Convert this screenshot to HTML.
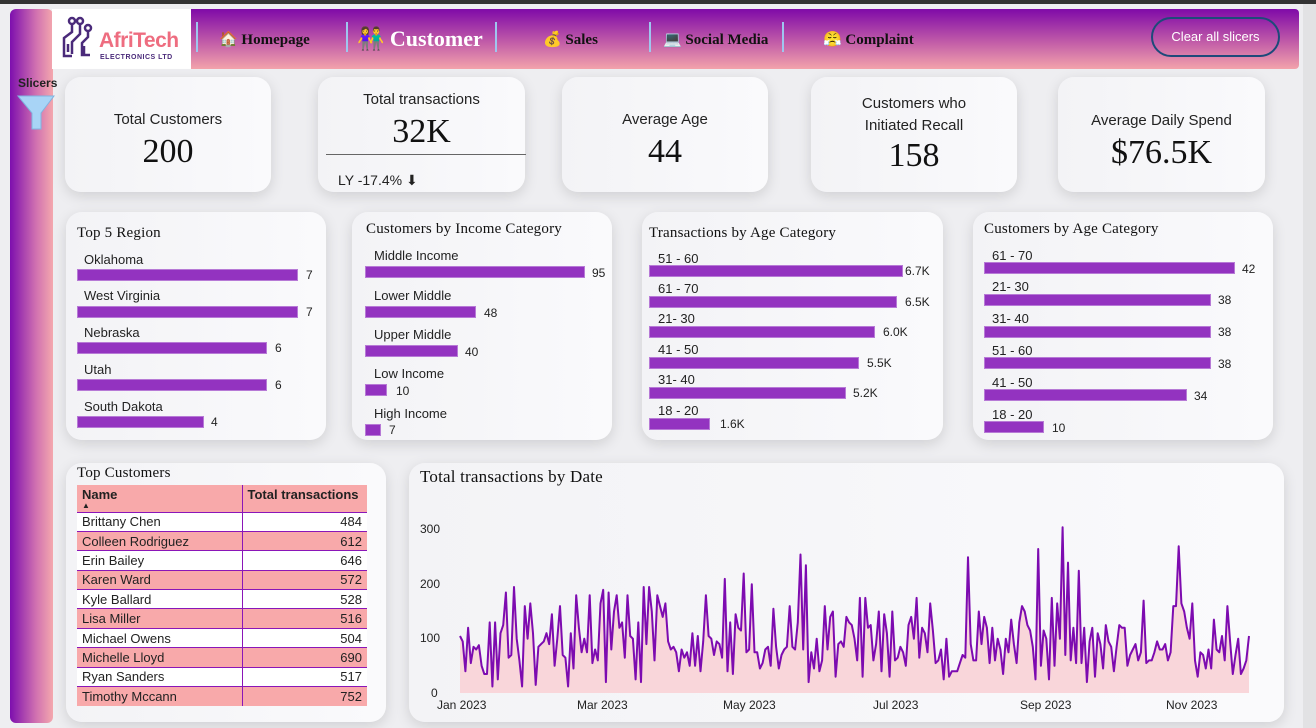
<!DOCTYPE html>
<html><head><meta charset="utf-8">
<style>
*{margin:0;padding:0;box-sizing:border-box}
body{width:1316px;height:728px;overflow:hidden;background:#eeeef1;font-family:"Liberation Sans",sans-serif;position:relative;color:#222}
.a{position:absolute}
.card{position:absolute;background:linear-gradient(90deg,#f3f3f6,#fafafc);border-radius:16px;box-shadow:0 4px 14px rgba(0,0,0,.13)}
.kt{position:absolute;width:100%;text-align:center;font-size:15px;color:#222}
.kv{position:absolute;width:100%;text-align:center;font-size:34px;font-family:"Liberation Serif",serif;color:#111}
.ct{position:absolute;font-family:"Liberation Serif",serif;font-size:15px;color:#111;letter-spacing:.2px;line-height:18px}
.bl{position:absolute;font-size:13px;color:#222;line-height:14px}
.bar{position:absolute;height:12px;background:#9333c0;border:1px solid #b77ad6}
.bv{position:absolute;font-size:12px;color:#222;line-height:13px}
.nav{position:absolute;top:30px;font-family:"Liberation Serif",serif;font-weight:bold;font-size:15px;color:#111}
.sep{position:absolute;top:22px;width:2px;height:30px;background:#9fc6ef}
table{border-collapse:collapse;font-size:13px}
td{height:19.4px;padding:0 5px;border-bottom:1.5px solid #8a16b8}
tr.p td{background:#f8a9aa}
tr.w td{background:#fff}
td+td{border-left:1.5px solid #8a16b8;text-align:right}
</style></head><body>
<div class="a" style="left:0;top:0;width:1316px;height:4px;background:#333"></div>
<div class="a" style="left:1303px;top:4px;width:13px;height:724px;background:#e2e2e4"></div>
<div class="a" style="left:10px;top:9px;width:43px;height:714px;border-radius:6px;background:linear-gradient(90deg,#7d0fae,#d070b0 60%,#f4a8ae);"></div>
<div class="a" style="left:18px;top:76px;font-size:12px;font-weight:bold;color:#222">Slicers</div>
<svg class="a" style="left:17px;top:95px" width="38" height="36"><path d="M1 1 H37 L24 18 V34 H15 V18 Z" fill="#a8d4f6" stroke="#7fb4e0"/></svg>
<div class="a" style="left:52px;top:9px;width:139px;height:60px;background:#fff"></div>
<svg class="a" style="left:60px;top:16px" width="40" height="48" fill="none" stroke="#4a2a7a" stroke-width="2.5"><circle cx="12" cy="5" r="3"/><circle cx="20" cy="5" r="3"/><circle cx="28" cy="12" r="3"/><path d="M12 8v8L4 22v18h8M20 8v10l-8 8v12M28 15v6l-6 6v12h8M8 28v8M24 30v8"/></svg>
<div class="a" style="left:99px;top:29px;font-size:21px;color:#ee6d80;font-weight:bold;letter-spacing:-.5px">AfriTech</div>
<div class="a" style="left:100px;top:54px;font-size:7px;color:#4a2a7a;font-weight:bold;letter-spacing:.5px">ELECTRONICS LTD</div>
<div class="a" style="left:191px;top:9px;width:1108px;height:60px;border-radius:0 4px 4px 0;background:linear-gradient(180deg,#7f0aa8,#c15ca8 55%,#f3a3ab)"></div>
<div class="sep" style="left:196px"></div>
<div class="nav" style="left:219px">🏠 Homepage</div>
<div class="sep" style="left:346px"></div>
<div class="nav" style="left:357px;top:26px;font-size:22px;color:#fff">👫 Customer</div>
<div class="sep" style="left:495px"></div>
<div class="nav" style="left:543px">💰 Sales</div>
<div class="sep" style="left:649px"></div>
<div class="nav" style="left:663px">💻 Social Media</div>
<div class="sep" style="left:782px"></div>
<div class="nav" style="left:823px">😤 Complaint</div>
<div class="a" style="left:1151px;top:17px;width:129px;height:40px;border:2px solid #1d4a7a;border-radius:20px;color:#fff;font-size:13px;text-align:center;line-height:36px">Clear all slicers</div>
<div class="card" style="left:65px;top:77px;width:206px;height:115px"><div class="kt" style="top:34px">Total Customers</div><div class="kv" style="top:56px">200</div></div>
<div class="card" style="left:318px;top:77px;width:207px;height:115px"><div class="kt" style="top:14px">Total transactions</div><div class="kv" style="top:36px">32K</div><div class="a" style="left:8px;top:77px;width:200px;height:1px;background:#666"></div><div class="a" style="left:20px;top:95px;font-size:14px">LY -17.4% ⬇</div></div>
<div class="card" style="left:562px;top:77px;width:206px;height:115px"><div class="kt" style="top:34px">Average Age</div><div class="kv" style="top:56px">44</div></div>
<div class="card" style="left:811px;top:77px;width:206px;height:115px"><div class="kt" style="top:16px;line-height:22px">Customers who<br>Initiated Recall</div><div class="kv" style="top:60px">158</div></div>
<div class="card" style="left:1058px;top:77px;width:207px;height:115px"><div class="kt" style="top:35px">Average Daily Spend</div><div class="kv" style="top:57px">$76.5K</div></div>

<div class="card" style="left:66px;top:212px;width:260px;height:228px"></div>
<div class="ct" style="left:77px;top:224px">Top 5 Region</div>
<div class="bl" style="left:84px;top:253px">Oklahoma</div><div class="bar" style="left:77px;top:269px;width:221px"></div><div class="bv" style="left:306px;top:269px">7</div>
<div class="bl" style="left:84px;top:289px">West Virginia</div><div class="bar" style="left:77px;top:306px;width:221px"></div><div class="bv" style="left:306px;top:306px">7</div>
<div class="bl" style="left:84px;top:326px">Nebraska</div><div class="bar" style="left:77px;top:342px;width:190px"></div><div class="bv" style="left:275px;top:342px">6</div>
<div class="bl" style="left:84px;top:363px">Utah</div><div class="bar" style="left:77px;top:379px;width:190px"></div><div class="bv" style="left:275px;top:379px">6</div>
<div class="bl" style="left:84px;top:400px">South Dakota</div><div class="bar" style="left:77px;top:416px;width:127px"></div><div class="bv" style="left:211px;top:416px">4</div>

<div class="card" style="left:352px;top:212px;width:260px;height:228px"></div>
<div class="ct" style="left:366px;top:220px">Customers by Income Category</div>
<div class="bl" style="left:374px;top:249px">Middle Income</div><div class="bar" style="left:365px;top:266px;width:220px"></div><div class="bv" style="left:592px;top:267px">95</div>
<div class="bl" style="left:374px;top:289px">Lower Middle</div><div class="bar" style="left:365px;top:306px;width:111px"></div><div class="bv" style="left:484px;top:307px">48</div>
<div class="bl" style="left:374px;top:328px">Upper Middle</div><div class="bar" style="left:365px;top:345px;width:93px"></div><div class="bv" style="left:465px;top:346px">40</div>
<div class="bl" style="left:374px;top:367px">Low Income</div><div class="bar" style="left:365px;top:384px;width:22px"></div><div class="bv" style="left:396px;top:385px">10</div>
<div class="bl" style="left:374px;top:407px">High Income</div><div class="bar" style="left:365px;top:424px;width:16px"></div><div class="bv" style="left:389px;top:424px">7</div>

<div class="card" style="left:642px;top:212px;width:301px;height:228px"></div>
<div class="ct" style="left:649px;top:224px">Transactions by Age Category</div>
<div class="bl" style="left:658px;top:252px">51 - 60</div><div class="bar" style="left:649px;top:265px;width:254px"></div><div class="bv" style="left:905px;top:265px">6.7K</div>
<div class="bl" style="left:658px;top:282px">61 - 70</div><div class="bar" style="left:649px;top:296px;width:248px"></div><div class="bv" style="left:905px;top:296px">6.5K</div>
<div class="bl" style="left:658px;top:312px">21- 30</div><div class="bar" style="left:649px;top:326px;width:226px"></div><div class="bv" style="left:883px;top:326px">6.0K</div>
<div class="bl" style="left:658px;top:343px">41 - 50</div><div class="bar" style="left:649px;top:357px;width:210px"></div><div class="bv" style="left:867px;top:357px">5.5K</div>
<div class="bl" style="left:658px;top:373px">31- 40</div><div class="bar" style="left:649px;top:387px;width:197px"></div><div class="bv" style="left:853px;top:387px">5.2K</div>
<div class="bl" style="left:658px;top:404px">18 - 20</div><div class="bar" style="left:649px;top:418px;width:61px"></div><div class="bv" style="left:720px;top:418px">1.6K</div>

<div class="card" style="left:973px;top:212px;width:300px;height:228px"></div>
<div class="ct" style="left:984px;top:220px">Customers by Age Category</div>
<div class="bl" style="left:992px;top:249px">61 - 70</div><div class="bar" style="left:984px;top:262px;width:251px"></div><div class="bv" style="left:1242px;top:263px">42</div>
<div class="bl" style="left:992px;top:280px">21- 30</div><div class="bar" style="left:984px;top:294px;width:227px"></div><div class="bv" style="left:1218px;top:294px">38</div>
<div class="bl" style="left:992px;top:312px">31- 40</div><div class="bar" style="left:984px;top:326px;width:227px"></div><div class="bv" style="left:1218px;top:326px">38</div>
<div class="bl" style="left:992px;top:344px">51 - 60</div><div class="bar" style="left:984px;top:357px;width:227px"></div><div class="bv" style="left:1218px;top:358px">38</div>
<div class="bl" style="left:992px;top:376px">41 - 50</div><div class="bar" style="left:984px;top:389px;width:203px"></div><div class="bv" style="left:1194px;top:390px">34</div>
<div class="bl" style="left:992px;top:408px">18 - 20</div><div class="bar" style="left:984px;top:421px;width:60px"></div><div class="bv" style="left:1052px;top:422px">10</div>

<div class="card" style="left:66px;top:463px;width:320px;height:259px"></div>
<div class="ct" style="left:77px;top:464px">Top Customers</div>
<div class="a" style="left:77px;top:485px">
<table style="width:290px">
<tr class="p"><td style="height:27px;font-weight:bold;vertical-align:top;padding-top:2px;width:165px">Name<div style="font-size:8px;line-height:8px">▲</div></td><td style="height:27px;font-weight:bold;vertical-align:top;padding-top:2px;text-align:left">Total transactions</td></tr>
<tr class="w"><td>Brittany Chen</td><td>484</td></tr>
<tr class="p"><td>Colleen Rodriguez</td><td>612</td></tr>
<tr class="w"><td>Erin Bailey</td><td>646</td></tr>
<tr class="p"><td>Karen Ward</td><td>572</td></tr>
<tr class="w"><td>Kyle Ballard</td><td>528</td></tr>
<tr class="p"><td>Lisa Miller</td><td>516</td></tr>
<tr class="w"><td>Michael Owens</td><td>504</td></tr>
<tr class="p"><td>Michelle Lloyd</td><td>690</td></tr>
<tr class="w"><td>Ryan Sanders</td><td>517</td></tr>
<tr class="p"><td style="border-bottom:none">Timothy Mccann</td><td style="border-bottom:none">752</td></tr>
</table></div>

<div class="card" style="left:409px;top:463px;width:875px;height:259px"></div>
<div class="ct" style="left:420px;top:468px;font-size:17px">Total transactions by Date</div>
<div class="a" style="left:420px;top:522px;font-size:12px">300</div>
<div class="a" style="left:420px;top:577px;font-size:12px">200</div>
<div class="a" style="left:420px;top:631px;font-size:12px">100</div>
<div class="a" style="left:431px;top:686px;font-size:12px">0</div>
<div class="a" style="left:437px;top:698px;font-size:12px">Jan 2023</div>
<div class="a" style="left:577px;top:698px;font-size:12px">Mar 2023</div>
<div class="a" style="left:723px;top:698px;font-size:12px">May 2023</div>
<div class="a" style="left:873px;top:698px;font-size:12px">Jul 2023</div>
<div class="a" style="left:1020px;top:698px;font-size:12px">Sep 2023</div>
<div class="a" style="left:1166px;top:698px;font-size:12px">Nov 2023</div>
<svg class="a" style="left:0;top:0" width="1316" height="728"><path id="ar" fill="#f9d6da"/><path id="ln" fill="none" stroke="#7d0bb0" stroke-width="2" stroke-linejoin="round"/></svg>
<script>
var v=[105,95,40,120,55,85,80,88,50,35,35,130,12,130,25,110,125,185,65,70,195,100,60,12,160,100,165,110,15,85,90,95,110,90,145,50,100,160,70,65,12,110,45,180,120,75,100,75,180,55,80,60,165,190,20,185,80,150,180,120,130,65,180,105,100,25,130,20,195,90,195,150,60,180,160,140,165,95,80,85,75,40,80,65,75,50,110,50,105,40,95,180,105,100,70,95,90,65,210,40,130,35,145,120,115,220,75,80,200,75,75,45,55,80,85,50,155,85,45,70,80,85,160,85,80,130,255,80,235,20,75,45,100,40,60,160,80,140,150,30,90,95,85,140,130,125,100,60,175,30,175,120,125,60,90,150,40,145,110,30,150,60,65,85,75,50,125,140,100,175,65,120,110,75,165,115,55,60,80,25,100,30,40,40,40,55,70,65,250,90,60,60,150,90,140,120,55,120,60,100,80,35,100,75,135,90,55,130,160,150,125,115,85,25,265,50,115,100,25,175,50,165,100,305,70,240,60,120,55,225,55,120,20,95,120,30,110,90,45,125,95,85,40,85,125,120,120,50,70,80,90,60,75,170,55,60,60,75,95,80,80,90,60,75,160,160,270,165,150,120,100,165,60,30,75,70,45,80,45,135,80,75,105,60,160,95,35,70,100,35,45,60,105];
var x0=460,x1=1249,y0=693,k=163/300,n=v.length,d='';
for(var i=0;i<n;i++){var x=x0+(x1-x0)*i/(n-1),y=y0-v[i]*k;d+=(i?'L':'M')+x.toFixed(1)+' '+y.toFixed(1);}
document.getElementById('ln').setAttribute('d',d);
document.getElementById('ar').setAttribute('d',d+'L'+x1+' '+y0+'L'+x0+' '+y0+'Z');
</script>
</body></html>
